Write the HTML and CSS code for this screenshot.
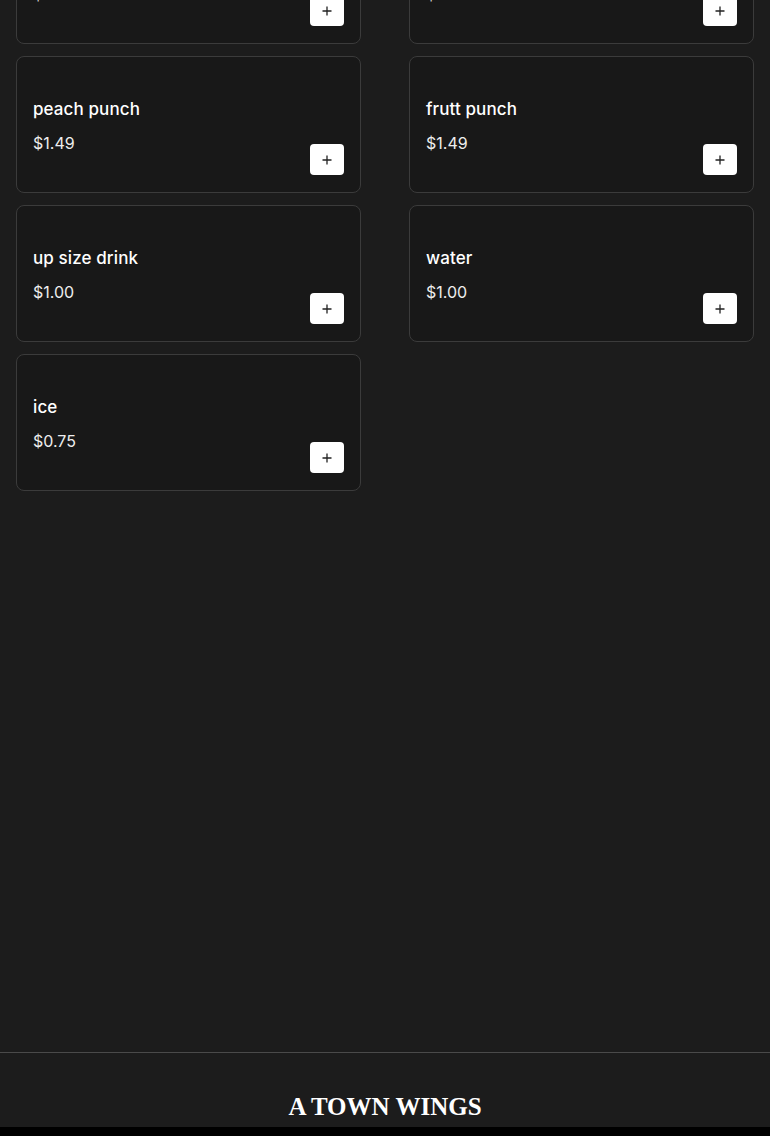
FILE: index.html
```html
<!DOCTYPE html>
<html lang="en">
<head>
<meta charset="utf-8">
<title>A Town Wings - Drinks</title>
<link rel="stylesheet" href="styles.css">
</head>
<body>
<main class="menu">
  <div class="grid">
    <div class="card">
      <div class="info"><div class="name">lemonade</div><div class="price">$1.49</div></div>
      <button class="add" aria-label="add"><svg viewBox="0 0 12 12" width="12" height="12"><path d="M6 1.5v9M1.5 6h9" stroke="#222" stroke-width="1.3" fill="none"/></svg></button>
    </div>
    <div class="card">
      <div class="info"><div class="name">sweet tea</div><div class="price">$1.49</div></div>
      <button class="add" aria-label="add"><svg viewBox="0 0 12 12" width="12" height="12"><path d="M6 1.5v9M1.5 6h9" stroke="#222" stroke-width="1.3" fill="none"/></svg></button>
    </div>
    <div class="card">
      <div class="info"><div class="name">peach punch</div><div class="price">$1.49</div></div>
      <button class="add" aria-label="add"><svg viewBox="0 0 12 12" width="12" height="12"><path d="M6 1.5v9M1.5 6h9" stroke="#222" stroke-width="1.3" fill="none"/></svg></button>
    </div>
    <div class="card">
      <div class="info"><div class="name">frutt punch</div><div class="price">$1.49</div></div>
      <button class="add" aria-label="add"><svg viewBox="0 0 12 12" width="12" height="12"><path d="M6 1.5v9M1.5 6h9" stroke="#222" stroke-width="1.3" fill="none"/></svg></button>
    </div>
    <div class="card">
      <div class="info"><div class="name">up size drink</div><div class="price">$1.00</div></div>
      <button class="add" aria-label="add"><svg viewBox="0 0 12 12" width="12" height="12"><path d="M6 1.5v9M1.5 6h9" stroke="#222" stroke-width="1.3" fill="none"/></svg></button>
    </div>
    <div class="card">
      <div class="info"><div class="name">water</div><div class="price">$1.00</div></div>
      <button class="add" aria-label="add"><svg viewBox="0 0 12 12" width="12" height="12"><path d="M6 1.5v9M1.5 6h9" stroke="#222" stroke-width="1.3" fill="none"/></svg></button>
    </div>
    <div class="card">
      <div class="info"><div class="name">ice</div><div class="price">$0.75</div></div>
      <button class="add" aria-label="add"><svg viewBox="0 0 12 12" width="12" height="12"><path d="M6 1.5v9M1.5 6h9" stroke="#222" stroke-width="1.3" fill="none"/></svg></button>
    </div>
  </div>
</main>
<footer class="footer">
  <div class="brand">A TOWN WINGS</div>
</footer>
<div class="bottom"></div>
</body>
</html>
```

FILE: styles.css
```css
* { box-sizing: border-box; }
html, body { margin: 0; padding: 0; background: #1c1c1c; }
body { font-family: "Inter", "Open Sans", sans-serif; color: #fff; overflow: hidden; }

.menu {
  margin-top: -93px;
  height: 1145px;
  padding: 0 16px;
}
.grid {
  display: grid;
  grid-template-columns: 1fr 1fr;
  column-gap: 48px;
  row-gap: 12px;
}
.card {
  height: 137px;
  background: #181818;
  border: 1px solid #3b3b3b;
  border-radius: 8px;
  padding: 40px 16px 17px 16px;
  display: flex;
  justify-content: space-between;
}
.info { display: flex; flex-direction: column; gap: 10px; align-self: flex-start; }
.name { font-size: 17px; line-height: 24px; font-weight: 500; letter-spacing: 0.1px; }
.price { font-size: 16px; line-height: 24px; font-weight: 400; color: #ededed; }
.add {
  align-self: flex-end;
  width: 34px;
  height: 31px;
  border: none;
  border-radius: 4px;
  background: #fff;
  padding: 0;
  display: flex;
  align-items: center;
  justify-content: center;
  cursor: pointer;
}
.footer {
  border-top: 1px solid #4a4a4a;
  height: 75px;
  display: flex;
  align-items: flex-end;
  justify-content: center;
  padding-bottom: 5px;
}
.brand {
  font-family: "Liberation Serif", "DejaVu Serif", serif;
  font-weight: 700;
  font-size: 25px;
  line-height: 30px;
  letter-spacing: 0;
  color: #fff;
}
.bottom { height: 40px; background: #000; }
```
